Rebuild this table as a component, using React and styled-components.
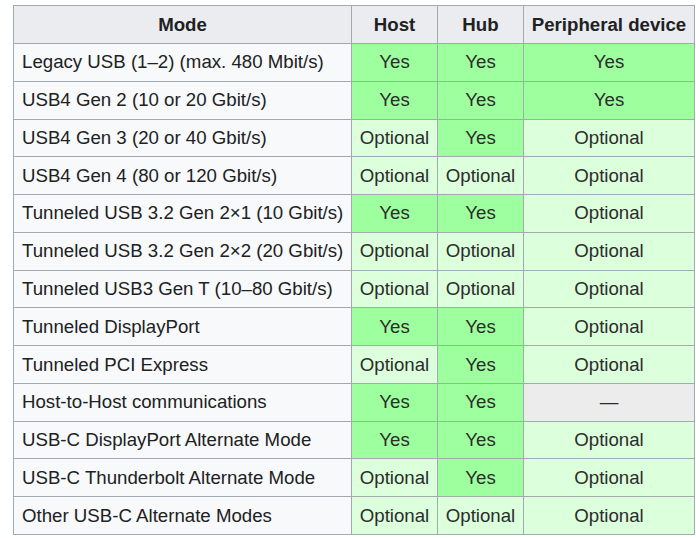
import React from "react"
import styled, { createGlobalStyle } from "styled-components"

const GlobalStyle = createGlobalStyle`
  html, body {
    margin: 0;
    padding: 0;
    background: #ffffff;
    overflow: hidden;
  }
  body {
    font-family: "Liberation Sans", Arial, sans-serif;
    color: #202122;
  }
`

const Page = styled.div`
  padding: 0 3px 0 13px;
  margin-top: -21px;
`

const Table = styled.table`
  border-collapse: collapse;
  background: #f8f9fa;
  border: 1px solid #a2a9b1;
  font-size: 18.67px;
  width: 681px;
  table-layout: fixed;
`

const Caption = styled.caption`
  font-weight: bold;
  font-size: 18.67px;
  height: 26px;
  line-height: 22px;
`

const HeadCell = styled.th`
  background: #eaecf0;
  border: 1px solid #a2a9b1;
  font-weight: bold;
  text-align: center;
  height: 37px;
  padding: 0 6px;
  white-space: nowrap;
`

const Row = styled.tr`
  height: 37.77px;
`

const ModeCell = styled.td`
  border: 1px solid #a2a9b1;
  padding: 0 8px;
  text-align: left;
  white-space: nowrap;
`

const tones = {
  yes: "#9eff9e",
  optional: "#dcffdc",
  na: "#ececec",
}

const StatusCell = styled.td`
  border: 1px solid #a2a9b1;
  text-align: center;
  vertical-align: middle;
  white-space: nowrap;
  padding: 0 2px;
  background: ${(p) => tones[p.$kind]};
  color: #2c2c2c;
`

const Y = "yes"
const O = "optional"
const N = "na"

const rows = [
  ["Legacy USB (1\u20132) (max. 480 Mbit/s)", Y, Y, Y],
  ["USB4 Gen 2 (10 or 20 Gbit/s)", Y, Y, Y],
  ["USB4 Gen 3 (20 or 40 Gbit/s)", O, Y, O],
  ["USB4 Gen 4 (80 or 120 Gbit/s)", O, O, O],
  ["Tunneled USB 3.2 Gen 2\u00d71 (10 Gbit/s)", Y, Y, O],
  ["Tunneled USB 3.2 Gen 2\u00d72 (20 Gbit/s)", O, O, O],
  ["Tunneled USB3 Gen T (10\u201380 Gbit/s)", O, O, O],
  ["Tunneled DisplayPort", Y, Y, O],
  ["Tunneled PCI Express", O, Y, O],
  ["Host-to-Host communications", Y, Y, N],
  ["USB-C DisplayPort Alternate Mode", Y, Y, O],
  ["USB-C Thunderbolt Alternate Mode", O, Y, O],
  ["Other USB-C Alternate Modes", O, O, O],
]

const label = (kind) => (kind === Y ? "Yes" : kind === O ? "Optional" : "\u2014")

export default function App() {
  return (
    <Page>
      <GlobalStyle />
      <Table>
        <Caption>Supported modes by device type</Caption>
        <colgroup>
          <col style={{ width: 338 }} />
          <col style={{ width: 86 }} />
          <col style={{ width: 86 }} />
          <col style={{ width: 171 }} />
        </colgroup>
        <thead>
          <tr>
            <HeadCell>Mode</HeadCell>
            <HeadCell>Host</HeadCell>
            <HeadCell>Hub</HeadCell>
            <HeadCell>Peripheral device</HeadCell>
          </tr>
        </thead>
        <tbody>
          {rows.map(([mode, host, hub, dev]) => (
            <Row key={mode}>
              <ModeCell>{mode}</ModeCell>
              <StatusCell $kind={host}>{label(host)}</StatusCell>
              <StatusCell $kind={hub}>{label(hub)}</StatusCell>
              <StatusCell $kind={dev}>{label(dev)}</StatusCell>
            </Row>
          ))}
        </tbody>
      </Table>
    </Page>
  )
}
